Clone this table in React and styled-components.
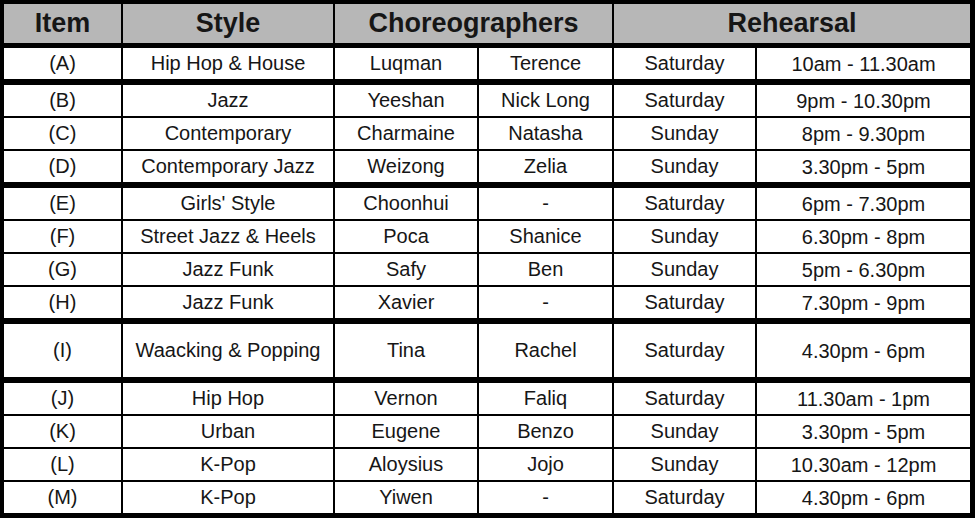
import styled, { createGlobalStyle } from "styled-components";

const GlobalStyle = createGlobalStyle`
    html, body {
        margin: 0;
        padding: 0;
        background: #fff;
    }
    body {
        font-family: "Liberation Sans", Arial, sans-serif;
        color: #161616;
    }
`;

const Table = styled.table`
    width: 975px;
    box-sizing: border-box;
    table-layout: fixed;
    border-collapse: separate;
    border-spacing: 0;
    border-style: solid;
    border-color: #000;
    border-width: 4px 5px 5px 4px;
`;

const Col = styled.col`
    width: ${(props) => props.$w}px;
`;

const Th = styled.th`
    box-sizing: border-box;
    padding: 0;
    background-color: #b7b7b7;
    font-size: 27px;
    font-weight: bold;
    line-height: 39px;
    text-align: center;
    border-bottom: 5px solid #000;
    border-right: ${(props) => (props.$last ? "none" : "2px solid #000")};
`;

// row height comes from line-height; the time column sits 2px lower
const Tr = styled.tr`
    & > td {
        border-bottom: ${(props) =>
            props.$sep === "none" ? "none" : props.$sep === "thick" ? "6px solid #000" : "2px solid #000"};
        line-height: ${(props) => (props.$tall ? 53 : 31)}px;
    }
    & > td:last-child {
        padding-top: 2px;
        line-height: ${(props) => (props.$tall ? 51 : 29)}px;
    }
`;

const Td = styled.td`
    box-sizing: border-box;
    padding: 0;
    font-size: 20px;
    text-align: center;
    white-space: nowrap;
    border-right: ${(props) => (props.$last ? "none" : "2px solid #000")};
`;

const rows = [
    ["(A)", "Hip Hop & House", "Luqman", "Terence", "Saturday", "10am - 11.30am", "thick"],
    ["(B)", "Jazz", "Yeeshan", "Nick Long", "Saturday", "9pm - 10.30pm", "thin"],
    ["(C)", "Contemporary", "Charmaine", "Natasha", "Sunday", "8pm - 9.30pm", "thin"],
    ["(D)", "Contemporary Jazz", "Weizong", "Zelia", "Sunday", "3.30pm - 5pm", "thick"],
    ["(E)", "Girls' Style", "Choonhui", "-", "Saturday", "6pm - 7.30pm", "thin"],
    ["(F)", "Street Jazz & Heels", "Poca", "Shanice", "Sunday", "6.30pm - 8pm", "thin"],
    ["(G)", "Jazz Funk", "Safy", "Ben", "Sunday", "5pm - 6.30pm", "thin"],
    ["(H)", "Jazz Funk", "Xavier", "-", "Saturday", "7.30pm - 9pm", "thick"],
    ["(I)", "Waacking & Popping", "Tina", "Rachel", "Saturday", "4.30pm - 6pm", "thick", true],
    ["(J)", "Hip Hop", "Vernon", "Faliq", "Saturday", "11.30am - 1pm", "thin"],
    ["(K)", "Urban", "Eugene", "Benzo", "Sunday", "3.30pm - 5pm", "thin"],
    ["(L)", "K-Pop", "Aloysius", "Jojo", "Sunday", "10.30am - 12pm", "thin"],
    ["(M)", "K-Pop", "Yiwen", "-", "Saturday", "4.30pm - 6pm", "none"],
];

const widths = [119, 212, 144, 135, 143, 213];

const App = () => {
    return (
        <>
            <GlobalStyle />
            <Table>
                <colgroup>
                    {widths.map((w, i) => (
                        <Col key={i} $w={w} />
                    ))}
                </colgroup>
                <thead>
                    <tr>
                        <Th>Item</Th>
                        <Th>Style</Th>
                        <Th colSpan={2}>Choreographers</Th>
                        <Th colSpan={2} $last>Rehearsal</Th>
                    </tr>
                </thead>
                <tbody>
                    {rows.map((r, i) => (
                        <Tr key={i} $sep={r[6]} $tall={r[7]}>
                            <Td>{r[0]}</Td>
                            <Td>{r[1]}</Td>
                            <Td>{r[2]}</Td>
                            <Td>{r[3]}</Td>
                            <Td>{r[4]}</Td>
                            <Td $last>{r[5]}</Td>
                        </Tr>
                    ))}
                </tbody>
            </Table>
        </>
    );
};

export default App;
